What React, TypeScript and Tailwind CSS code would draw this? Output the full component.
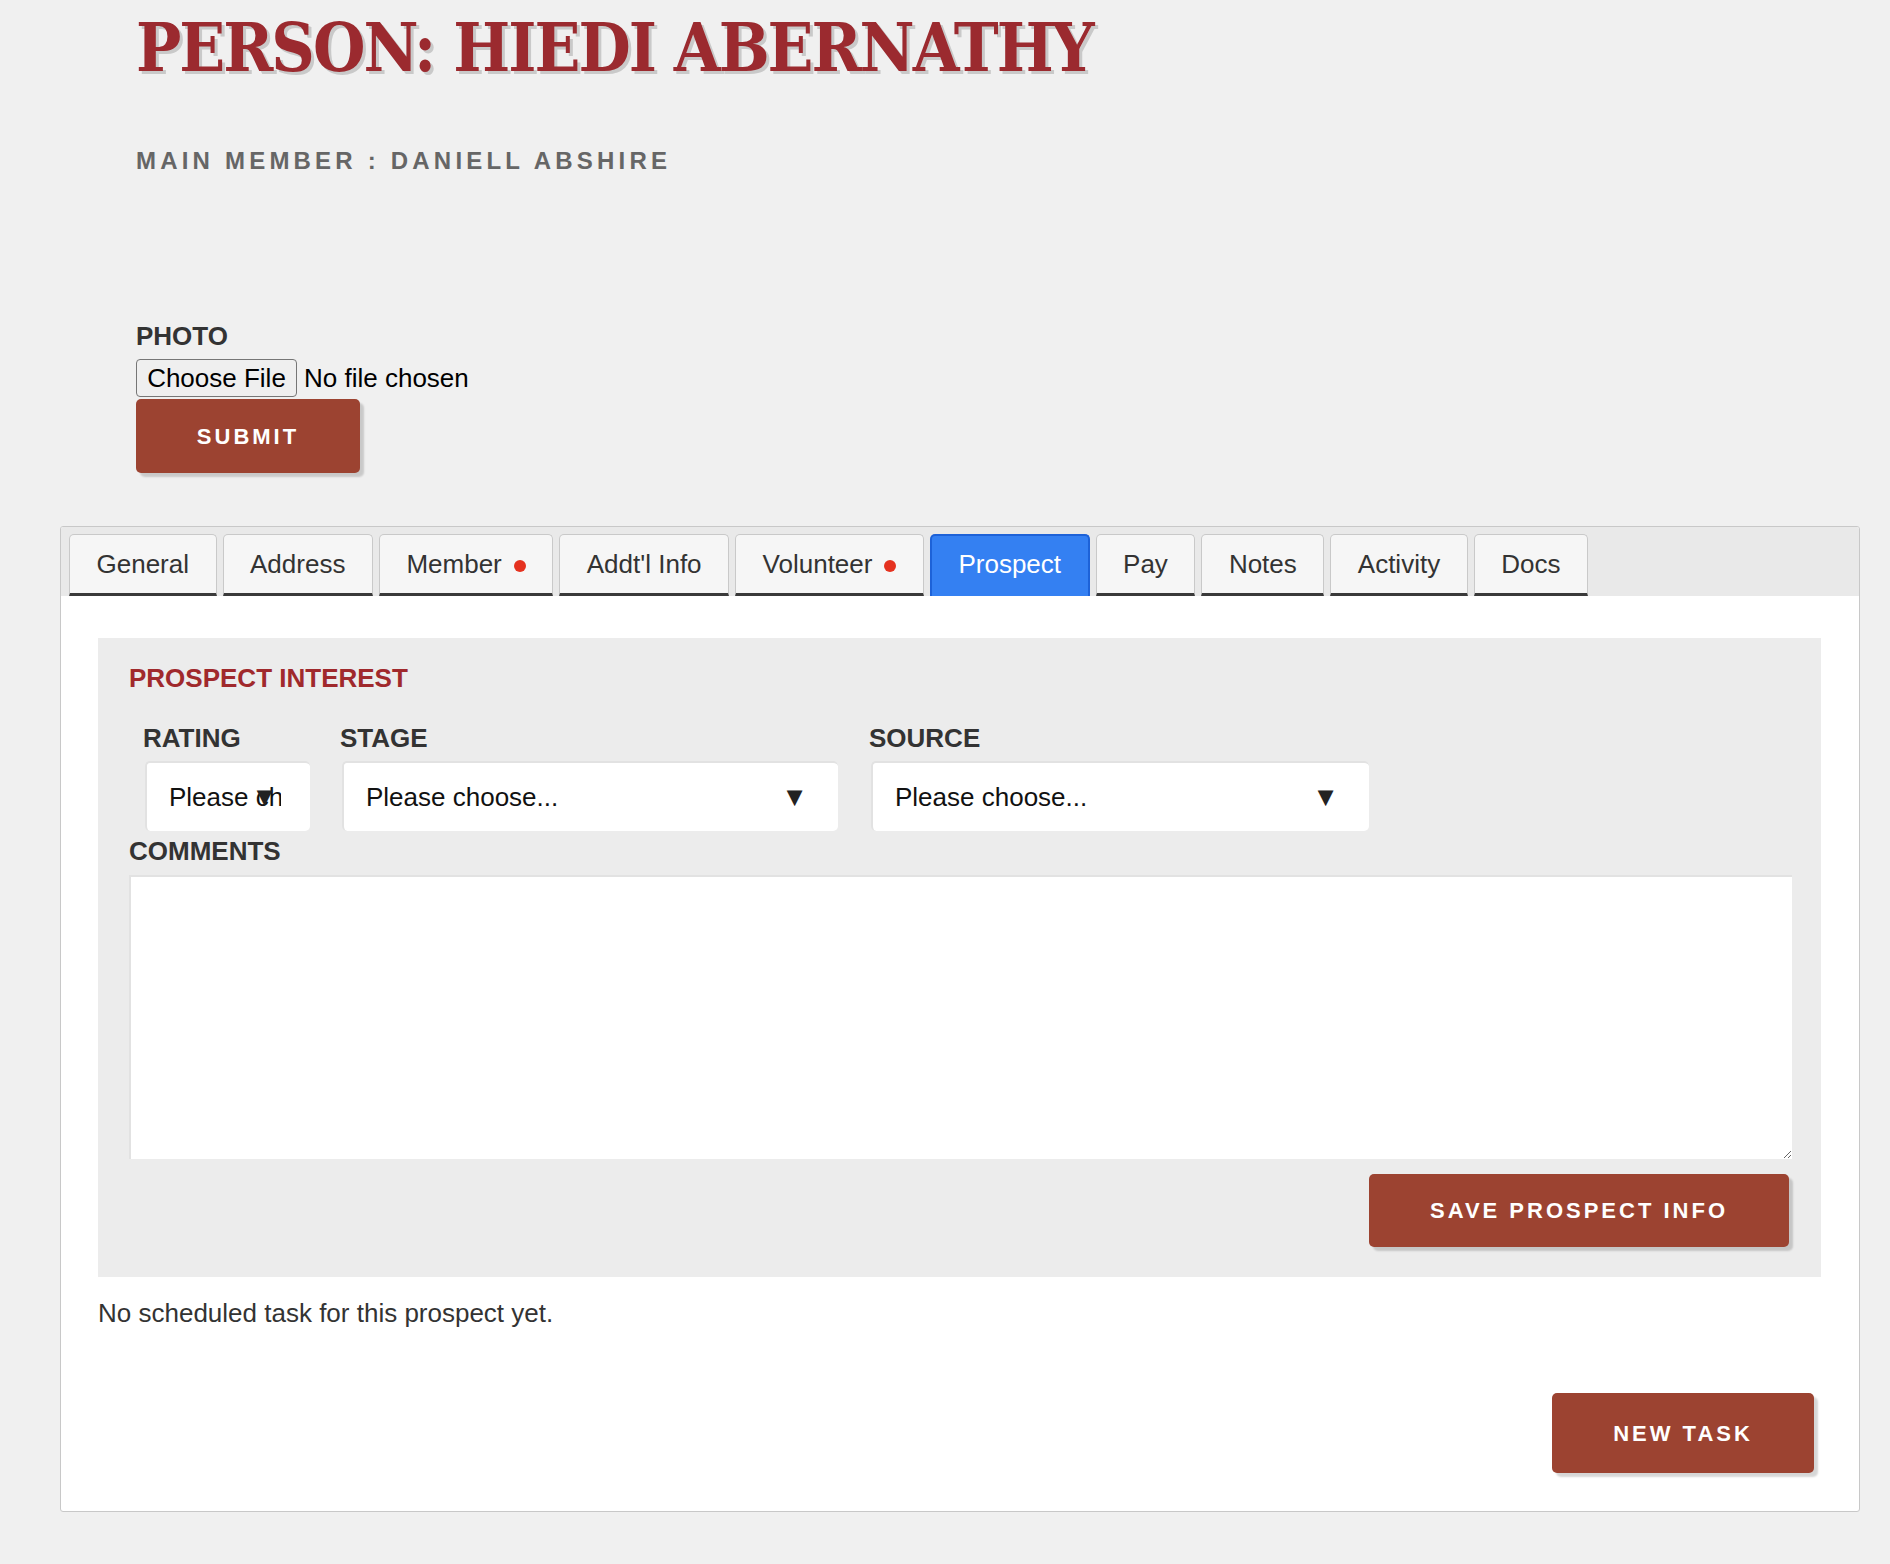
import React from "react";

const tabs: { label: string; dot?: boolean; active?: boolean }[] = [
  { label: "General" },
  { label: "Address" },
  { label: "Member", dot: true },
  { label: "Addt'l Info" },
  { label: "Volunteer", dot: true },
  { label: "Prospect", active: true },
  { label: "Pay" },
  { label: "Notes" },
  { label: "Activity" },
  { label: "Docs" },
];

function FakeSelect({ width, arrowRight }: { width: string; arrowRight: string }) {
  return (
    <div
      className={`relative ml-[2px] h-[70px] ${width} rounded-[5px] bg-white border-t-2 border-l-2 border-[#e2e2e2] flex items-center`}
    >
      <div className="ml-[22px] mr-[29px] flex-1 min-w-0 overflow-hidden">
        <span className="whitespace-nowrap text-[26px] leading-[30px] text-[#111] block">Please choose...</span>
      </div>
      <span className={`absolute top-1/2 -translate-y-1/2 ${arrowRight} text-[27px] leading-none text-[#222]`}>▼</span>
    </div>
  );
}

export default function App() {
  return (
    <div className="min-h-screen bg-[#f0f0f0] font-['Liberation_Sans',Arial,sans-serif] text-[#333] pb-[51px]">
      <div className="pl-[136px] pt-[14px]">
        <h1 className="text-[67px] leading-[67px] font-bold text-[#9b2a2f] font-['DejaVu_Serif_Condensed','DejaVu_Serif',serif] tracking-[-2px] [text-shadow:3px_3px_0_#c9c9c9] whitespace-nowrap">
          PERSON: HIEDI ABERNATHY
        </h1>
        <div className="mt-[68px] text-[24px] leading-[24px] font-bold text-[#666] tracking-[4.2px]">
          MAIN MEMBER : DANIELL ABSHIRE
        </div>
        <div className="mt-[150px] text-[26px] leading-[26px] font-bold text-[#333]">PHOTO</div>
        <div className="mt-[10px] flex items-center h-[38px]">
          <button className="h-[38px] w-[161px] rounded-[4px] border border-[#767676] bg-[#efefef] text-[26px] leading-[30px] text-black">
            Choose File
          </button>
          <span className="ml-[7px] text-[26px] leading-[30px] text-black">No file chosen</span>
        </div>
        <button className="mt-[2px] h-[74px] w-[224px] rounded-[5px] bg-[#9c4331] text-white font-bold text-[22px] tracking-[3px] shadow-[4px_4px_2px_rgba(0,0,0,0.16)]">
          SUBMIT
        </button>
      </div>

      <div className="ml-[60px] mt-[53px] w-[1800px] rounded-[3px] border border-[#c8c8c8] bg-white overflow-hidden">
        <div className="flex gap-[6px] bg-[#e9e9e9] pl-[8px] pt-[7px]">
          {tabs.map((t) =>
            t.active ? (
              <div
                key={t.label}
                className="h-[62px] px-[26.5px] rounded-t-[5px] border-2 border-b-0 border-[#1d62d8] bg-[#3480f2] text-white text-[26px] flex items-center pb-[3px]"
              >
                {t.label}
              </div>
            ) : (
              <div
                key={t.label}
                className="h-[62px] px-[26.5px] rounded-t-[5px] border border-[#c9c9c9] border-b-[3px] border-b-[#3a3a3a] bg-[#f6f6f6] text-[#333] text-[26px] flex items-center"
              >
                {t.label}
                {t.dot && <span className="ml-[12px] mt-[4px] inline-block h-[12px] w-[12px] rounded-full bg-[#e5321f]" />}
              </div>
            )
          )}
        </div>

        <div className="pl-[37px] pr-[38px] pt-[42px] pb-[38px]">
          <div className="bg-[#ececec] px-[31px] pt-[27px] pb-[30px]">
            <h2 className="text-[26px] leading-[26px] font-bold text-[#a0292c]">PROSPECT INTEREST</h2>
            <div className="mt-[34px] pl-[14px] flex">
              <div className="w-[197px]">
                <div className="text-[26px] leading-[26px] font-bold text-[#333]">RATING</div>
                <div className="mt-[10px]">
                  <FakeSelect width="w-[165px]" arrowRight="right-[32px]" />
                </div>
              </div>
              <div className="w-[529px]">
                <div className="text-[26px] leading-[26px] font-bold text-[#333]">STAGE</div>
                <div className="mt-[10px]">
                  <FakeSelect width="w-[496px]" arrowRight="right-[30px]" />
                </div>
              </div>
              <div className="w-[520px]">
                <div className="text-[26px] leading-[26px] font-bold text-[#333]">SOURCE</div>
                <div className="mt-[10px]">
                  <FakeSelect width="w-[498px]" arrowRight="right-[30px]" />
                </div>
              </div>
            </div>
            <div className="mt-[7px] text-[26px] leading-[26px] font-bold text-[#333]">COMMENTS</div>
            <textarea className="mt-[11px] block h-[284px] w-[1663px] bg-white border-t-2 border-l-2 border-[#e2e2e2] outline-none text-[26px]" />
            <div className="mt-[15px] flex justify-end pr-[1px]">
              <button className="h-[73px] w-[420px] rounded-[5px] bg-[#9c4331] text-white font-bold text-[22px] tracking-[3px] shadow-[4px_4px_2px_rgba(0,0,0,0.16)]">
                SAVE PROSPECT INFO
              </button>
            </div>
          </div>
          <p className="mt-[23px] text-[26px] leading-[26px] text-[#333]">No scheduled task for this prospect yet.</p>
          <div className="mt-[67px] flex justify-end pr-[7px]">
            <button className="h-[80px] w-[262px] rounded-[5px] bg-[#9c4331] text-white font-bold text-[22px] tracking-[3px] shadow-[4px_4px_2px_rgba(0,0,0,0.16)]">
              NEW TASK
            </button>
          </div>
        </div>
      </div>
    </div>
  );
}
